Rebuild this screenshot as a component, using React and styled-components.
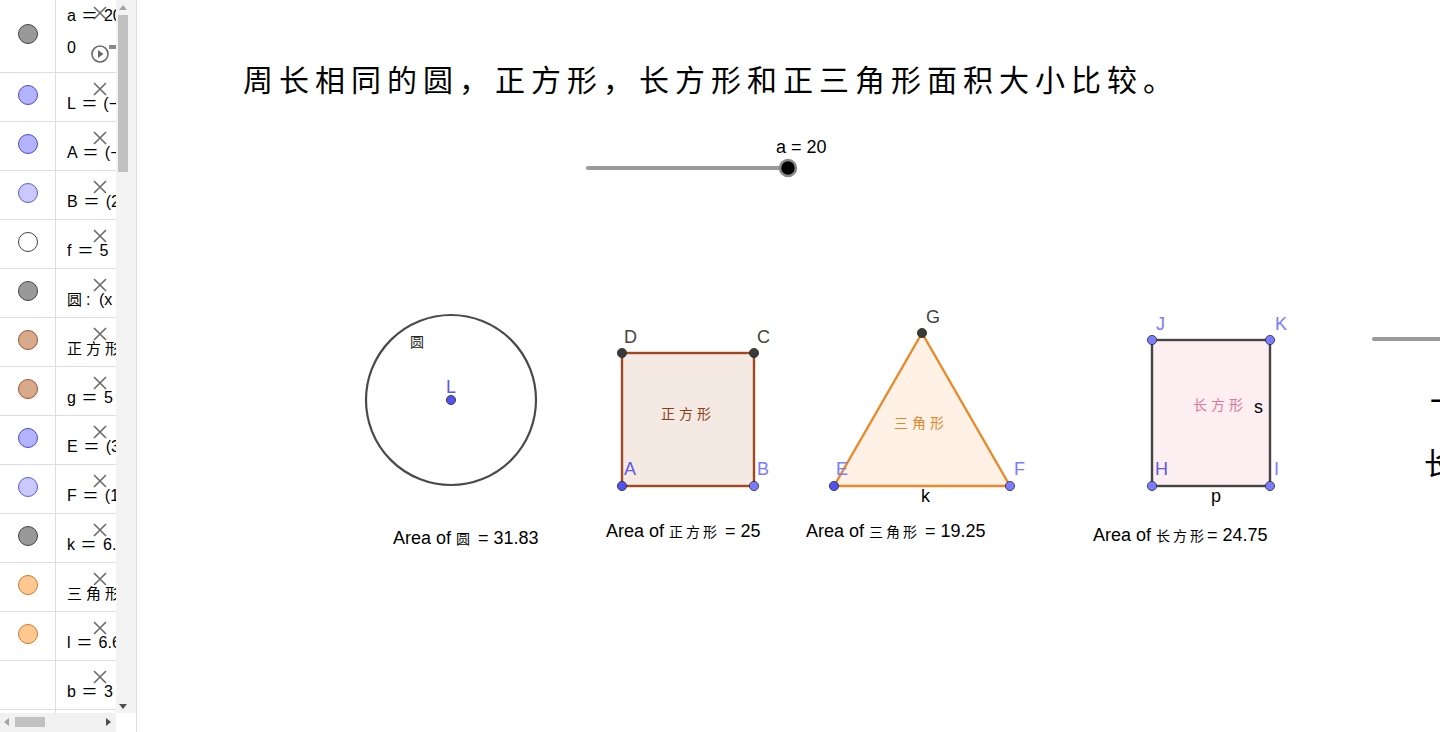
import React from 'react';
import styled, { createGlobalStyle } from 'styled-components';

const Global = createGlobalStyle`
  html, body { margin: 0; padding: 0; width: 1440px; height: 732px; overflow: hidden; background: #fff; }
  body { font-family: "Liberation Sans", Arial, sans-serif; }
`;

const Page = styled.div`
  display: flex;
  width: 1440px;
  height: 732px;
`;

const Panel = styled.aside`
  width: 136px;
  flex: none;
  border-right: 1px solid #dcdcdc;
  display: flex;
  flex-direction: column;
  overflow: hidden;
`;

const PanelTop = styled.div`
  display: flex;
  height: 713px;
  flex: none;
`;

const List = styled.div`
  width: 116px;
  flex: none;
  overflow: hidden;
`;

const VTrack = styled.div`
  flex: 1;
  background: #f3f3f3;
  position: relative;
`;

const VThumb = styled.div`
  position: absolute;
  left: 2px;
  top: 15px;
  width: 10px;
  height: 157px;
  background: #c1c1c1;
`;

const Arrow = styled.div`
  position: absolute;
  width: 0;
  height: 0;
  border-left: ${p => (p.$dir === 'up' || p.$dir === 'down' ? '4px solid transparent' : p.$dir === 'right' ? '5px solid #505050' : 'none')};
  border-right: ${p => (p.$dir === 'up' || p.$dir === 'down' ? '4px solid transparent' : p.$dir === 'left' ? '5px solid #a3a3a3' : 'none')};
  border-top: ${p => (p.$dir === 'left' || p.$dir === 'right' ? '4px solid transparent' : p.$dir === 'down' ? '5px solid #505050' : 'none')};
  border-bottom: ${p => (p.$dir === 'left' || p.$dir === 'right' ? '4px solid transparent' : p.$dir === 'up' ? '5px solid #a3a3a3' : 'none')};
  left: ${p => p.$x}px;
  top: ${p => p.$y}px;
`;

const PanelBottom = styled.div`
  display: flex;
  height: 19px;
  flex: none;
`;

const HTrack = styled.div`
  width: 116px;
  flex: none;
  background: #f1f1f1;
  position: relative;
`;

const HThumb = styled.div`
  position: absolute;
  left: 15px;
  top: 4px;
  width: 30px;
  height: 10px;
  background: #c1c1c1;
`;

const Row = styled.div`
  display: flex;
  height: ${p => p.$h}px;
  box-sizing: border-box;
  border-bottom: 1px solid #dedede;
  position: relative;
  flex: none;
`;

const MarkerCell = styled.div`
  width: 56px;
  flex: none;
  border-right: 1px solid #dedede;
  display: flex;
  align-items: center;
  justify-content: center;
  padding-bottom: ${p => p.$pb}px;
  box-sizing: border-box;
`;

const Marker = styled.div`
  width: 18px;
  height: 18px;
  border-radius: 50%;
  background: ${p => p.$fill};
  border: 1px solid ${p => p.$stroke};
`;

const Content = styled.div`
  flex: 1;
  min-width: 0;
  overflow: hidden;
  white-space: nowrap;
  padding: ${p => p.$pt}px 0 0 11px;
  font-size: 16px;
  line-height: 18px;
  word-spacing: 4px;
  color: #000;
`;

const Eq = styled.span`
  display: inline-block;
  font-size: 19px;
  transform: scaleX(1.3);
`;

const Cjk = styled.span`
  font-family: "Noto Sans CJK SC", sans-serif;
  font-size: 15px;
  letter-spacing: 4px;
`;

const SecondLine = styled.div`
  margin-top: 14px;
`;

const CloseIcon = styled.svg`
  position: absolute;
  left: 92px;
  top: ${p => p.$top}px;
  width: 16px;
  height: 16px;
`;

const PlayIcon = styled.svg`
  position: absolute;
  left: 90px;
  top: 44px;
  width: 26px;
  height: 20px;
`;

const Canvas = styled.main`
  flex: 1;
  position: relative;
  overflow: hidden;
  background: #fff;
`;

const Drawing = styled.svg`
  position: absolute;
  left: 0;
  top: 0;
  width: 1303px;
  height: 732px;
`;

const Title = styled.h1`
  position: relative;
  margin: 0;
  padding: 58px 0 0 106px;
  font-family: "Noto Sans CJK SC", sans-serif;
  font-weight: 400;
  font-size: 30px;
  line-height: 40px;
  letter-spacing: 6px;
  color: #000;
  white-space: nowrap;
`;

const rows = [
  { marker: { fill: '#999999', stroke: '#444' } },
  { marker: { fill: '#b3b3ff', stroke: '#4a4ad0' }, name: 'L', eq: '=', text: '(−5.73, 3.14)' },
  { marker: { fill: '#b3b3ff', stroke: '#4a4ad0' }, name: 'A', eq: '=', text: '(−2.5, 1.2)' },
  { marker: { fill: '#c9c9ff', stroke: '#5a5ad8' }, name: 'B', eq: '=', text: '(2.5, 1.2)' },
  { marker: { fill: '#ffffff', stroke: '#444' }, name: 'f', eq: '=', text: '5' },
  { marker: { fill: '#999999', stroke: '#444' }, cjk: '圆', name: ':', text: '(x + 5.73)²' },
  { marker: { fill: '#d8aa8c', stroke: '#a0522d' }, cjk: '正方形', eq: '=', text: '25' },
  { marker: { fill: '#d8aa8c', stroke: '#a0522d' }, name: 'g', eq: '=', text: '5' },
  { marker: { fill: '#b3b3ff', stroke: '#4a4ad0' }, name: 'E', eq: '=', text: '(3.6, 1.2)' },
  { marker: { fill: '#c9c9ff', stroke: '#5a5ad8' }, name: 'F', eq: '=', text: '(10.27, 1.2)' },
  { marker: { fill: '#999999', stroke: '#444' }, name: 'k', eq: '=', text: '6.67' },
  { marker: { fill: '#ffc890', stroke: '#d0782a' }, cjk: '三角形', eq: '=', text: '19.25' },
  { marker: { fill: '#ffc890', stroke: '#d0782a' }, name: 'l', eq: '=', text: '6.67' },
  { marker: null, name: 'b', eq: '=', text: '3' },
  { marker: null },
];

const Close = ({ top }) => (
  <CloseIcon $top={top} viewBox="0 0 16 16">
    <path d="M2 2 L14 14 M14 2 L2 14" stroke="#6a6a6a" strokeWidth="1.6" fill="none" />
  </CloseIcon>
);

const AlgebraRow = ({ row, index }) => {
  const first = index === 0;
  const h = first ? 73 : 49;
  const empty = !first && !row.name && !row.cjk;
  return (
    <Row $h={h}>
      <MarkerCell $pb={first ? 5 : 4}>
        {row.marker && <Marker $fill={row.marker.fill} $stroke={row.marker.stroke} />}
      </MarkerCell>
      <Content $pt={first ? 6 : 21}>
        {first ? (
          <>
            <div>a <Eq>=</Eq> 20</div>
            <SecondLine>0</SecondLine>
          </>
        ) : empty ? null : (
          <>
            {row.cjk && <Cjk>{row.cjk}</Cjk>}
            {row.name}
            {row.eq && <> <Eq>{row.eq}</Eq> </>}
            {!row.eq && ' '}
            {row.text}
          </>
        )}
      </Content>
      {!empty && <Close top={first ? 5 : 8} />}
      {first && (
        <PlayIcon viewBox="0 0 26 20">
          <circle cx="10" cy="10" r="8" stroke="#6a6a6a" strokeWidth="1.6" fill="none" />
          <path d="M8 6 L13.5 10 L8 14 Z" fill="#6a6a6a" />
          <rect x="19" y="1" width="7" height="4" fill="#8a8a8a" />
        </PlayIcon>
      )}
    </Row>
  );
};

const LABEL = '"Liberation Sans", Arial, sans-serif';
const CJKF = '"Noto Sans CJK SC", sans-serif';

const Pt = ({ x, y, fill }) => (
  <circle cx={x} cy={y} r="4.6" fill={fill} stroke="#2a2a2a" strokeWidth="0.8" />
);

const Lbl = ({ x, y, color = '#444', children, size = 18 }) => (
  <text x={x} y={y} fill={color} fontFamily={LABEL} fontSize={size}>
    {children}
  </text>
);

const Area = ({ x, y, name, value, gap = true }) => (
  <text x={x} y={y} fontFamily={LABEL} fontSize="18" fill="#000">
    Area of <tspan fontFamily={CJKF} fontSize="14" letterSpacing="3">{name}</tspan>{gap ? ' ' : ''}= {value}
  </text>
);

const ShapeName = ({ x, y, color, children }) => (
  <text x={x} y={y} fontFamily={CJKF} fontSize="14" fill={color} letterSpacing="4">{children}</text>
);

const BLUE = '#5252ee';
const BLUE2 = '#7b7bff';
const LBLUE = '#5a5ae6';

const Geometry = () => (
  <Drawing viewBox="137 0 1303 732">
    {/* slider */}
    <Lbl x={776} y={153} color="#000">a = 20</Lbl>
    <line x1={588} y1={168} x2={786} y2={168} stroke="#999" strokeWidth="4" strokeLinecap="round" />
    <circle cx={788} cy={168} r="8" fill="#000" stroke="#8a8a8a" strokeWidth="2.5" />

    {/* circle */}
    <circle cx={451} cy={400} r={85} fill="none" stroke="#4a4a4a" strokeWidth="2.2" />
    <text x={410} y={347} fontFamily={CJKF} fontSize="14" fill="#222">圆</text>
    <Pt x={451} y={400} fill={BLUE} />
    <Lbl x={446} y={393} color={LBLUE}>L</Lbl>
    <Area x={393} y={544} name="圆" value="31.83" />

    {/* square */}
    <rect x={622} y={353} width={132} height={133} fill="#f5e9e4" stroke="#a0481e" strokeWidth="2.4" />
    <ShapeName x={661} y={419} color="#8b3f14">正方形</ShapeName>
    <Pt x={622} y={353} fill="#3a3a3a" />
    <Pt x={754} y={353} fill="#3a3a3a" />
    <Pt x={622} y={486} fill={BLUE} />
    <Pt x={754} y={486} fill={BLUE2} />
    <Lbl x={624} y={343}>D</Lbl>
    <Lbl x={757} y={343}>C</Lbl>
    <Lbl x={624} y={475} color={LBLUE}>A</Lbl>
    <Lbl x={757} y={475} color={BLUE2}>B</Lbl>
    <Area x={606} y={537} name="正方形" value="25" />

    {/* triangle */}
    <polygon points="834,486 1010,486 922,333" fill="#fff1e5" stroke="#e8892a" strokeWidth="2.4" strokeLinejoin="round" />
    <ShapeName x={894} y={428} color="#e0882c">三角形</ShapeName>
    <Pt x={922} y={333} fill="#3a3a3a" />
    <Pt x={834} y={486} fill={BLUE} />
    <Pt x={1010} y={486} fill={BLUE2} />
    <Lbl x={926} y={323}>G</Lbl>
    <Lbl x={836} y={475} color={BLUE2}>E</Lbl>
    <Lbl x={1014} y={475} color={BLUE2}>F</Lbl>
    <Lbl x={921} y={502} color="#000">k</Lbl>
    <Area x={806} y={537} name="三角形" value="19.25" />

    {/* rectangle */}
    <rect x={1152} y={340} width={118} height={146} fill="#fdeef2" stroke="#444" strokeWidth="2.4" />
    <ShapeName x={1193} y={410} color="#e0769a">长方形</ShapeName>
    <Lbl x={1254} y={413} color="#000">s</Lbl>
    <Lbl x={1211} y={502} color="#000">p</Lbl>
    <Pt x={1152} y={340} fill={BLUE2} />
    <Pt x={1270} y={340} fill={BLUE2} />
    <Pt x={1152} y={486} fill={BLUE2} />
    <Pt x={1270} y={486} fill={BLUE2} />
    <Lbl x={1156} y={330} color={BLUE2}>J</Lbl>
    <Lbl x={1275} y={330} color={BLUE2}>K</Lbl>
    <Lbl x={1155} y={475} color={LBLUE}>H</Lbl>
    <Lbl x={1274} y={475} color={BLUE2}>I</Lbl>
    <Area x={1093} y={541} name="长方形" value="24.75" gap={false} />

    {/* partially visible content at right edge */}
    <line x1={1374} y1={339} x2={1442} y2={339} stroke="#999" strokeWidth="4" strokeLinecap="round" />
    <text x={1430} y={412} fontFamily={CJKF} fontSize="30" fill="#000">一</text>
    <text x={1424} y={474} fontFamily={CJKF} fontSize="30" fill="#000">长</text>
  </Drawing>
);

export default function App() {
  return (
    <>
      <Global />
      <Page>
        <Panel>
          <PanelTop>
            <List>
              {rows.map((r, i) => (
                <AlgebraRow key={i} row={r} index={i} />
              ))}
            </List>
            <VTrack>
              <Arrow $dir="up" $x={3} $y={5} />
              <VThumb />
              <Arrow $dir="down" $x={3} $y={704} />
            </VTrack>
          </PanelTop>
          <PanelBottom>
            <HTrack>
              <Arrow $dir="left" $x={4} $y={5} />
              <HThumb />
              <Arrow $dir="right" $x={106} $y={5} />
            </HTrack>
          </PanelBottom>
        </Panel>
        <Canvas>
          <Geometry />
          <Title>周长相同的圆，正方形，长方形和正三角形面积大小比较。</Title>
        </Canvas>
      </Page>
    </>
  );
}
